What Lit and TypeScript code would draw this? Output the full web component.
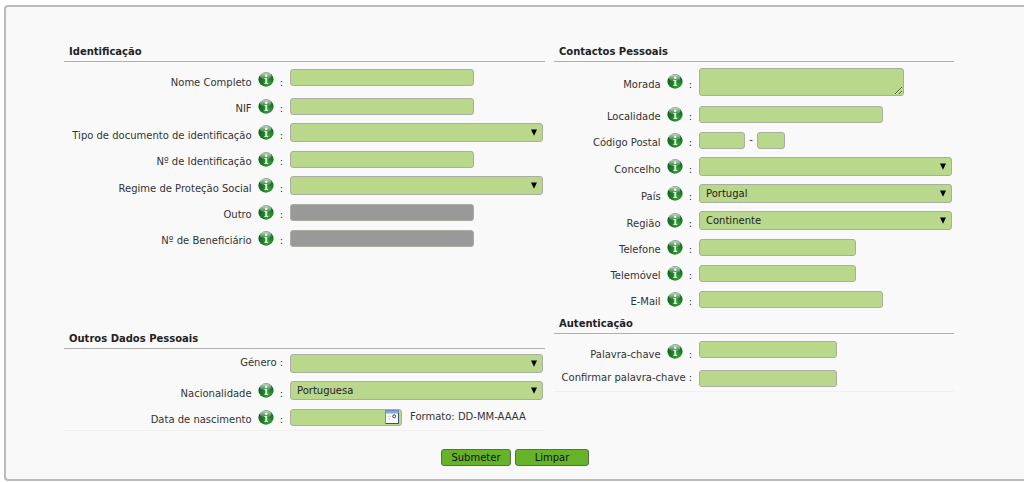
import { LitElement, html, css, nothing } from "lit";
import { customElement, property } from "lit/decorators.js";
import { classMap } from "lit/directives/class-map.js";

type Kind = "text" | "password" | "select" | "textarea" | "postal" | "date";

interface Field {
  id: string;
  label: string;
  kind: Kind;
  size?: "s" | "m" | "l";
  value?: string;
  info?: boolean;
  disabled?: boolean;
}

const identificacao: Field[] = [
  { id: "nome", label: "Nome Completo", kind: "text", info: true },
  { id: "nif", label: "NIF", kind: "text", info: true },
  { id: "tipo", label: "Tipo de documento de identificação", kind: "select", info: true },
  { id: "numero", label: "Nº de Identificação", kind: "text", info: true },
  { id: "regime", label: "Regime de Proteção Social", kind: "select", info: true },
  { id: "outro", label: "Outro", kind: "text", info: true, disabled: true },
  { id: "beneficiario", label: "Nº de Beneficiário", kind: "text", info: true, disabled: true },
];

const outros: Field[] = [
  { id: "genero", label: "Género", kind: "select" },
  { id: "nacionalidade", label: "Nacionalidade", kind: "select", value: "Portuguesa", info: true },
  { id: "nascimento", label: "Data de nascimento", kind: "date", info: true },
];

const contactos: Field[] = [
  { id: "morada", label: "Morada", kind: "textarea", info: true },
  { id: "localidade", label: "Localidade", kind: "text", info: true },
  { id: "postal", label: "Código Postal", kind: "postal", info: true },
  { id: "concelho", label: "Concelho", kind: "select", info: true },
  { id: "pais", label: "País", kind: "select", value: "Portugal", info: true },
  { id: "regiao", label: "Região", kind: "select", value: "Continente", info: true },
  { id: "telefone", label: "Telefone", kind: "text", size: "m", info: true },
  { id: "telemovel", label: "Telemóvel", kind: "text", size: "m", info: true },
  { id: "email", label: "E-Mail", kind: "text", info: true },
];

const autenticacao: Field[] = [
  { id: "palavra", label: "Palavra-chave", kind: "password", size: "s", info: true },
  { id: "confirmar", label: "Confirmar palavra-chave", kind: "password", size: "s" },
];

@customElement("info-icon")
export class InfoIcon extends LitElement {
  static styles = css`
    :host { display: block; width: 16px; height: 15px; }
    svg { display: block; }
  `;
  render() {
    return html`<svg width="16" height="15" viewBox="0 0 16 15" aria-hidden="true">
      <defs>
        <radialGradient id="ball" cx="0.62" cy="0.75" r="0.75">
          <stop offset="0" stop-color="#3fa53f" />
          <stop offset="0.5" stop-color="#1c7a27" />
          <stop offset="1" stop-color="#0f5a1c" />
        </radialGradient>
        <linearGradient id="shine" x1="0" y1="0" x2="0" y2="1">
          <stop offset="0" stop-color="#fff" stop-opacity="0.75" />
          <stop offset="1" stop-color="#fff" stop-opacity="0.1" />
        </linearGradient>
      </defs>
      <ellipse cx="8" cy="7.5" rx="7.6" ry="7.2" fill="url(#ball)" />
      <ellipse cx="7.6" cy="4" rx="5.8" ry="3.4" fill="url(#shine)" />
      <circle cx="8.2" cy="3.8" r="1.2" fill="#fff" />
      <path d="M6.4 6h2.8v5h0.9v1.1H6.4V11h0.9V7.1h-0.9z" fill="#dff3d8" />
    </svg>`;
  }
}

@customElement("form-section")
export class FormSection extends LitElement {
  @property() heading = "";
  @property({ attribute: false }) fields: Field[] = [];

  static styles = css`
    :host { display: block; }
    * { box-sizing: border-box; }
    .heading {
      margin: 0;
      padding: 0 5px 3px;
      font-size: 10px;
      line-height: 12px;
      font-weight: bold;
      color: #222;
      border-bottom: 1px solid #b0b0b0;
    }
    .row { display: flex; gap: 7px; align-items: center; height: 26px; }
    .row.select { height: 27px; }
    .row.first { height: 31px; }
    .row.first .label.info { padding-top: 4px; }
    .row.first.plain { height: 28px; }
    .row.textarea { height: 39px; }
    .label {
      flex: none;
      width: var(--label-width);
      display: flex;
      justify-content: flex-end;
      align-items: center;
      gap: 6px;
      white-space: nowrap;
    }
    .label.plain { gap: 3px; }
    .label.info .text { padding-top: 6px; }
    info-icon { padding-bottom: 2px; }
    .control { flex: 1; display: flex; align-items: center; padding-right: 2px; }
    input, select, textarea, .calendar {
      font: inherit;
      color: #222;
      margin: 0;
    }
    input, select, textarea {
      border: 1px solid #a9ada2;
      border-radius: 3px;
      background: #bad88b;
      padding: 0 6px;
    }
    input { height: 17px; }
    input:disabled { background: #999; }
    .l { width: 184px; }
    .m { width: 157px; }
    .s { width: 138px; }
    .code { width: 46px; }
    .suffix { width: 28px; }
    .dash { width: 12px; text-align: center; }
    textarea { display: block; width: 205px; height: 28px; resize: both; overflow: hidden; }
    .pick { flex: 1; display: grid; align-items: center; }
    .pick > * { grid-area: 1 / 1; }
    select { appearance: none; width: 100%; height: 19px; }
    .arrow { justify-self: end; margin-right: 5px; pointer-events: none; }
    .date { display: grid; align-items: center; width: 112px; margin-right: 8px; }
    .date > * { grid-area: 1 / 1; }
    .date input { width: 100%; }
    .calendar {
      justify-self: end;
      margin-right: 3px;
      padding: 0;
      border: 0;
      background: none;
      height: 14px;
    }
    .calendar svg { display: block; }
  `;

  private control(f: Field) {
    switch (f.kind) {
      case "select":
        return html`<span class="pick">
          <select id=${f.id}><option>${f.value ?? ""}</option></select>
          <svg class="arrow" width="8" height="7" viewBox="0 0 8 7" aria-hidden="true">
            <path d="M1 0.5h6L4 6.8z" fill="#000" />
          </svg>
        </span>`;
      case "textarea":
        return html`<textarea id=${f.id}></textarea>`;
      case "postal":
        return html`<input id=${f.id} class="code" type="text" /><span class="dash">-</span
          ><input class="suffix" type="text" aria-label="Código Postal, extensão" />`;
      case "date":
        return html`<span class="date">
            <input id=${f.id} type="text" />
            <button class="calendar" type="button" aria-label="Calendário">
              <svg width="14" height="14" viewBox="0 0 14 14">
                <rect x="0.5" y="0.5" width="13" height="13" fill="#fff" stroke="#6f8fb5" />
                <rect x="1" y="1" width="12" height="2.5" fill="#7fa8dc" />
                <path d="M13.5 3v10.5H1" fill="none" stroke="#31557c" />
                <path d="M2.5 6.5h4M2.5 9h4M4.5 4.8v6" stroke="#ead9e2" />
                <circle cx="9.2" cy="6.3" r="1.5" fill="none" stroke="#3c3346" />
              </svg>
            </button>
          </span>
          <span>Formato: DD-MM-AAAA</span>`;
      default:
        return html`<input id=${f.id} class=${f.size ?? "l"} type=${f.kind} ?disabled=${f.disabled ?? false} />`;
    }
  }

  render() {
    return html`
      <h2 class="heading">${this.heading}</h2>
      ${this.fields.map(
        (f, i) => html`<div
          class=${classMap({
            row: true,
            first: i === 0 && f.kind !== "textarea",
            plain: !f.info,
            select: f.kind === "select",
            textarea: f.kind === "textarea",
          })}
        >
          <label class=${classMap({ label: true, info: !!f.info, plain: !f.info })} for=${f.id}>
            <span class="text">${f.label}</span>
            ${f.info ? html`<info-icon></info-icon>` : nothing}
            <span class="text">:</span>
          </label>
          <div class="control">${this.control(f)}</div>
        </div>`
      )}
    `;
  }
}

@customElement("app-root")
export class AppRoot extends LitElement {
  static styles = css`
    :host {
      display: block;
      background: #fff;
      color: #333;
      font: 10px/12px "DejaVu Sans", Verdana, sans-serif;
    }
    * { box-sizing: border-box; }
    .panel {
      margin: 5px 0 0 4px;
      padding: 39px 70px 13px 58px;
      border: 2px solid #bbb;
      border-right: 0;
      border-radius: 4px 0 0 4px;
      background: #f9f9f9;
    }
    .columns {
      display: grid;
      grid-template-columns: 481fr 400fr;
      gap: 9px;
      align-items: start;
    }
    .column { display: flex; flex-direction: column; }
    .left { --label-width: 219px; gap: 82px; }
    .right { --label-width: 138px; gap: 6px; }
    .closed { border-bottom: 1px solid #f0f0f0; }
    .actions {
      display: flex;
      justify-content: center;
      gap: 4px;
      margin: 18px -70px 0 -58px;
    }
    .action {
      width: 74px;
      height: 17px;
      padding: 0;
      border: 1px solid #55704a;
      border-radius: 3px;
      background: #66b32a;
      color: #111;
      font: inherit;
    }
    .submit { width: 70px; }
  `;

  render() {
    return html`<form class="panel" @submit=${(e: Event) => e.preventDefault()}>
      <div class="columns">
        <div class="column left">
          <form-section heading="Identificação" .fields=${identificacao}></form-section>
          <form-section class="closed" heading="Outros Dados Pessoais" .fields=${outros}></form-section>
        </div>
        <div class="column right">
          <form-section heading="Contactos Pessoais" .fields=${contactos}></form-section>
          <form-section class="closed" heading="Autenticação" .fields=${autenticacao}></form-section>
        </div>
      </div>
      <div class="actions">
        <button class="action submit" type="submit">Submeter</button>
        <button class="action" type="reset">Limpar</button>
      </div>
    </form>`;
  }
}
